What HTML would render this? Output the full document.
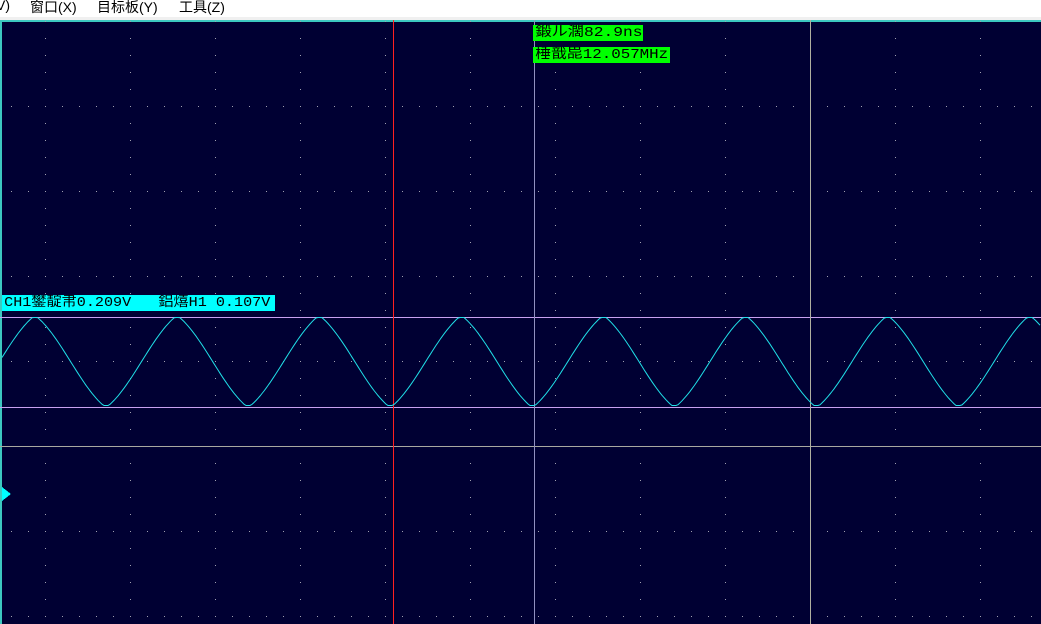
<!DOCTYPE html>
<html><head><meta charset="utf-8"><style>
html,body{margin:0;padding:0;width:1041px;height:624px;overflow:hidden;background:#fff;}
.menu{position:absolute;left:0;top:0;width:1041px;height:17px;background:#fff;font:14px "Liberation Sans","Noto Sans CJK SC",sans-serif;color:#000;}
.menu span{position:absolute;top:-3px;}
.lbl{position:absolute;font:14px "Liberation Mono","Noto Sans CJK SC",monospace;color:#000;line-height:16px;height:16px;white-space:pre;overflow:hidden;}
.lbl span{display:inline-block;transform-origin:0 0;padding-left:2px;}
</style></head><body>
<div class="menu"><span style="left:-4px">V)</span><span style="left:30px">窗口(X)</span><span style="left:97px">目标板(Y)</span><span style="left:179px">工具(Z)</span></div>
<svg id="s" style="position:absolute;left:0;top:0" width="1041" height="624" shape-rendering="crispEdges">
<rect x="0" y="17" width="1041" height="3" fill="#f0f0f0"/>
<rect x="0" y="20" width="1041" height="604" fill="#000033"/>
<rect x="0" y="20" width="1041" height="2" fill="#3cc8c0"/>
<rect x="0" y="20" width="2" height="604" fill="#3cc8c0"/>
<g id="dots" fill="#a0a0b0"></g>
<rect x="0" y="317" width="1041" height="1" fill="#c8a0f0"/>
<rect x="0" y="407" width="1041" height="1" fill="#c8a0f0"/>
<rect x="0" y="446" width="1041" height="1" fill="#a8a8a0"/>
<rect x="393" y="20" width="1" height="604" fill="#ff2020"/>
<rect x="534" y="20" width="1" height="604" fill="#9090c0"/>
<rect x="810" y="20" width="1" height="604" fill="#b0b0a0"/>
<polyline id="w" fill="none" stroke="#20e0e8" stroke-width="1" shape-rendering="auto"/>
<polygon points="2,487 11,494 2,501" fill="#00ffff"/>
</svg>
<div class="lbl" style="left:533px;top:25px;width:110px;background:#00ff00"><span style="transform:scaleX(1.16)">鍛ル濶82.9ns</span></div>
<div class="lbl" style="left:533px;top:47px;width:137px;background:#00ff00"><span style="transform:scaleX(1.13)">棰戠巼12.057MHz</span></div>
<div class="lbl" style="left:2px;top:295px;width:273px;background:#00ffff"><span style="transform:scaleX(1.08)">CH1鐢靛帇0.209V   鋁熺H1 0.107V</span></div>
<script>
var g=document.getElementById('dots'),h='';
for(var cx=45;cx<1041;cx+=85){for(var y=21;y<624;y+=17)h+='<rect x="'+cx+'" y="'+y+'" width="1" height="1"/>';}
for(var ry=106;ry<624;ry+=85){for(var x=11;x<1041;x+=17)h+='<rect x="'+x+'" y="'+ry+'" width="1" height="1"/>';}
g.innerHTML=h;
var P=142.1,x0=35-P/4,p=[];
for(var x=2;x<=1041;x+=2){var t=2*Math.PI*(x-x0)/P;var s=Math.sin(t);s=0.4*s+0.6*(2/Math.PI)*Math.asin(s);s=Math.max(-1,Math.min(1,s*1.05));p.push(x+','+(361.5-44*s).toFixed(1));}
document.getElementById('w').setAttribute('points',p.join(' '));
</script>
</body></html>
